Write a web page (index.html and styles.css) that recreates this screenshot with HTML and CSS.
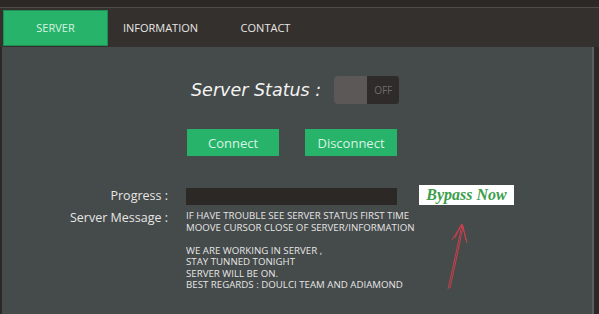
FILE: index.html
```html
<!DOCTYPE html>
<html lang="en">
<head>
    <meta charset="UTF-8">
    <meta name="viewport" content="width=device-width, initial-scale=1.0">
    <title>Server</title>
    <link rel="stylesheet" href="styles.css">
</head>
<body>
    <div class="top-strip"></div>
    <div class="tab-bar">
        <a href="#" class="tab active">SERVER</a>
        <a href="#" class="tab">INFORMATION</a>
        <a href="#" class="tab">CONTACT</a>
    </div>
    <div class="panel">
        <div class="controls">
            <div class="status-row">
                <span class="status-title">Server Status :</span>
                <div class="toggle">
                    <span class="toggle-knob"></span>
                    <span class="toggle-off">OFF</span>
                </div>
            </div>
            <div class="button-row">
                <button class="btn">Connect</button>
                <button class="btn">Disconnect</button>
            </div>
        </div>
        <div class="info-grid">
            <span class="label">Progress :</span>
            <div class="progress-row">
                <div class="progress-bar"></div>
                <span class="bypass">Bypass Now</span>
            </div>
            <span class="label">Server Message :</span>
            <div class="message">
                <p>IF HAVE TROUBLE SEE SERVER STATUS FIRST TIME<br>MOOVE CURSOR CLOSE OF SERVER/INFORMATION</p>
                <p>WE ARE WORKING IN SERVER ,<br>STAY TUNNED TONIGHT<br>SERVER WILL BE ON.<br>BEST REGARDS : DOULCI TEAM AND ADIAMOND</p>
            </div>
        </div>
        <svg class="arrow" width="40" height="80" viewBox="0 0 40 80">
            <path d="M8 75 C12 57 16 40 22 10" />
            <path d="M10 74 C14 56 18 38 23 12" />
            <path d="M22 10 L12 26 M21 11 L15 24" />
            <path d="M22 10 L27 29 M23 12 L26 26" />
        </svg>
    </div>
</body>
</html>
```

FILE: styles.css
```css
* {
    margin: 0;
    padding: 0;
    box-sizing: border-box;
    font-family: 'Open Sans', 'Noto Sans', sans-serif;
}

body {
    width: 599px;
    height: 314px;
    overflow: hidden;
    background: #2c2826;
}

.top-strip {
    height: 8px;
    border-bottom: 1px solid #4e4b4a;
    background: #2c2826;
}

.tab-bar {
    display: flex;
    height: 39px;
    padding: 2px 0 1px 3px;
    background: #33302e;
}

.tab {
    width: 105px;
    display: flex;
    justify-content: center;
    align-items: center;
    padding-bottom: 2px;
    color: #e8e6e4;
    font-size: 11px;
    text-decoration: none;
}

.tab.active {
    background: #27b46a;
    color: #d6f2e2;
    border: 1px solid #1f8e55;
}

.panel {
    position: relative;
    margin-left: 2px;
    width: 592px;
    height: 267px;
    background: #454a4a;
    border-right: 2px solid #5a5f5f;
}

.controls {
    padding: 29px 0 0 185px;
}

.status-row {
    display: flex;
    align-items: center;
    gap: 13px;
    padding-left: 4px;
}

.status-title {
    color: #f4f4f4;
    font-size: 17.5px;
    font-style: italic;
    font-family: 'DejaVu Sans', sans-serif;
}

.toggle {
    display: flex;
    width: 65px;
    height: 28px;
    border-radius: 3px;
    overflow: hidden;
    background: #2e2b2a;
}

.toggle-knob {
    width: 33px;
    background: #5b5857;
}

.toggle-off {
    flex: 1;
    display: flex;
    justify-content: center;
    align-items: center;
    color: #6e6c6b;
    font-size: 10px;
}

.button-row {
    display: flex;
    gap: 26px;
    margin-top: 25px;
}

.btn {
    width: 92px;
    height: 27px;
    border: none;
    background: #27b46a;
    color: #d8f2e3;
    font-size: 13px;
    cursor: pointer;
}

.info-grid {
    display: grid;
    grid-template-columns: 166px 1fr;
    column-gap: 18px;
    row-gap: 4px;
    margin-top: 31px;
    color: #e6e6e6;
}

.label {
    text-align: right;
    font-size: 12.5px;
    line-height: 17px;
}

.progress-row {
    display: flex;
    align-items: center;
    gap: 22px;
}

.progress-bar {
    width: 211px;
    height: 17px;
    background: #2b2826;
}

.bypass {
    margin-top: -2px;
    width: 95px;
    height: 20px;
    background: #ffffff;
    color: #3c9e4c;
    font-family: 'Liberation Serif', serif;
    font-style: italic;
    font-weight: bold;
    font-size: 16px;
    line-height: 20px;
    text-align: center;
}

.message {
    font-size: 9.7px;
    line-height: 11.5px;
    margin-top: 1px;
}

.message p {
    margin-bottom: 11.5px;
}

.arrow {
    position: absolute;
    left: 438px;
    top: 167px;
    fill: none;
    stroke: #c9404d;
    stroke-width: 1;
}
```
